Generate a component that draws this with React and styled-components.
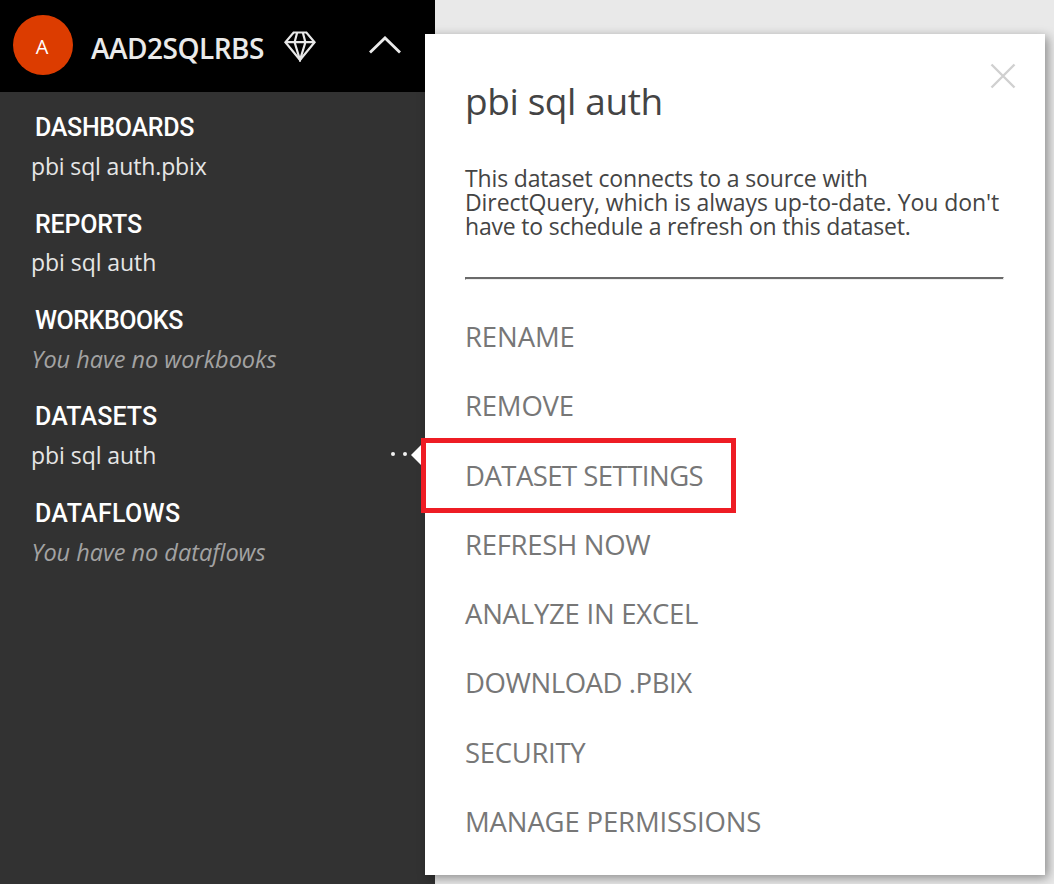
import React from "react";
import styled, { createGlobalStyle } from "styled-components";

const GlobalStyle = createGlobalStyle`
  *, *::before, *::after { box-sizing: border-box; }
  body {
    margin: 0;
    background: #e9e9e9;
    font-family: "Open Sans", "Noto Sans", sans-serif;
    overflow: hidden;
  }
`;

const Page = styled.div`
  position: relative;
  display: flex;
  width: 1054px;
  height: 884px;
  overflow: hidden;
`;

const Sidebar = styled.aside`
  width: 435px;
  height: 100%;
  background: #323232;
`;

const WorkspaceHeader = styled.header`
  display: flex;
  align-items: center;
  height: 92px;
  padding: 0 34px 0 13px;
  background: #000;
  color: #eaeaea;
`;

const Avatar = styled.span`
  display: grid;
  place-items: center;
  width: 60px;
  height: 60px;
  margin: 0 18px 2px 0;
  padding-top: 2px;
  padding-right: 2px;
  border-radius: 50%;
  background: #dc3c00;
  color: #fff;
  font-size: 20px;
`;

const WorkspaceName = styled.h1`
  margin: 3px 0 0;
  font-size: 28px;
  font-weight: 600;
  line-height: 36px;
  letter-spacing: -0.5px;
  white-space: nowrap;
`;

const PremiumIcon = styled.svg`
  margin: 1px 0 0 20.5px;
  flex: none;
`;

const CollapseIcon = styled.svg`
  margin: 0 0 2px auto;
  flex: none;
`;

const Section = styled.section`
  height: 96.4px;
  padding: 20.3px 0 0 31px;
`;

const SectionTitle = styled.h2`
  margin: 0 0 5.7px;
  padding-left: 4px;
  color: #fff;
  font-family: Roboto, sans-serif;
  font-size: 25px;
  font-weight: 500;
  line-height: 32px;
  letter-spacing: ${(p) => p.$tracking}px;
`;

const SectionItem = styled.div`
  display: flex;
  align-items: center;
  justify-content: space-between;
  height: 32px;
  padding-right: 16px;
  color: #e6e6e6;
  font-size: 23px;
  line-height: 32px;
  letter-spacing: ${(p) => p.$tracking}px;
`;

const EmptyNote = styled.div`
  padding-left: 0.5px;
  color: #a3a3a3;
  font-size: 23.5px;
  font-style: italic;
  line-height: 32px;
  letter-spacing: -0.02px;
`;

const MoreDots = styled.span`
  display: flex;
  gap: 7.5px;
  margin-top: -2px;
  &::before, &::after, i { content: ""; width: 4.5px; height: 4.5px; border-radius: 50%; background: #f2f2f2; }
`;

const Flyout = styled.div`
  position: absolute;
  left: 425px;
  top: 34px;
  width: 620px;
  height: 841px;
  padding: 42.6px 41px 0 40px;
  background: #fff;
  box-shadow: 3px 3px 10px rgba(0, 0, 0, 0.4);
`;

const FlyoutArrow = styled.span`
  position: absolute;
  left: -14px;
  top: 406.5px;
  border: 14px solid transparent;
  border-left: 0;
  border-right-color: #fff;
`;

const CloseButton = styled.button`
  position: absolute;
  right: 29px;
  top: 29px;
  display: grid;
  place-items: center;
  width: 26px;
  height: 26px;
  padding: 0;
  border: 0;
  background: none;
`;

const FlyoutTitle = styled.h2`
  margin: 0 0 41.4px;
  color: #444;
  font-size: 37px;
  font-weight: 400;
  line-height: 48px;
  letter-spacing: -0.4px;
`;

const Description = styled.p`
  margin: 0;
  color: #444;
  font-size: 23px;
  line-height: 24px;
  white-space: nowrap;
`;

const DescriptionLine = styled.span`
  display: block;
  letter-spacing: ${(p) => p.$tracking}px;
`;

const Divider = styled.hr`
  height: 3px;
  margin: 39px 0 21.9px;
  border: 1px solid;
  border-color: #6a6a6a #eee #eee #6a6a6a;
  background: #6a6a6a;
`;

const Menu = styled.ul`
  margin: 0;
  padding: 0;
  list-style: none;
`;

const MenuItem = styled.li`
  position: relative;
  height: 69.32px;
  color: #777;
  font-size: 27.5px;
  line-height: 69.32px;
  letter-spacing: ${(p) => p.$tracking}px;
  white-space: nowrap;
`;

const Highlight = styled.span`
  position: absolute;
  left: -44px;
  top: -2.5px;
  width: 315px;
  height: 75px;
  border: 5px solid #ee1c24;
`;

const sections = [
  { title: "DASHBOARDS", tracking: -0.3, item: "pbi sql auth.pbix", itemTracking: -0.14 },
  { title: "REPORTS", tracking: -0.17, item: "pbi sql auth", itemTracking: -0.05 },
  { title: "WORKBOOKS", tracking: -0.45, empty: "You have no workbooks" },
  { title: "DATASETS", tracking: 0.1, item: "pbi sql auth", itemTracking: -0.05, more: true },
  { title: "DATAFLOWS", tracking: 0.3, empty: "You have no dataflows" },
];

const description = [
  ["This dataset connects to a source with", -0.15],
  ["DirectQuery, which is always up-to-date. You don't", -0.08],
  ["have to schedule a refresh on this dataset.", -0.2],
];

const actions = [
  ["RENAME", -0.1],
  ["REMOVE", -0.2],
  ["DATASET SETTINGS", -0.53],
  ["REFRESH NOW", -0.3],
  ["ANALYZE IN EXCEL", -0.24],
  ["DOWNLOAD .PBIX", -0.43],
  ["SECURITY", -0.33],
  ["MANAGE PERMISSIONS", -0.15],
];

export default function App() {
  return (
    <>
      <GlobalStyle />
      <Page>
        <Sidebar>
          <WorkspaceHeader>
            <Avatar>A</Avatar>
            <WorkspaceName>AAD2SQLRBS</WorkspaceName>
            <PremiumIcon width="32" height="31" viewBox="0 0 32 31" fill="none" stroke="#e8e8e8" strokeWidth="2.2">
              <path d="M9.6 1.5H22.4L30.6 11.2L16 29L1.4 11.2Z" />
              <path d="M1.4 11.2H30.6M13.2 1.5L10.6 11.2L16 29L21.4 11.2L18.8 1.5" />
            </PremiumIcon>
            <CollapseIcon width="32" height="18" viewBox="0 0 32 18" fill="none" stroke="#eaeaea" strokeWidth="2.8">
              <path d="M1 16.6L16 1.9L31 16.6" />
            </CollapseIcon>
          </WorkspaceHeader>
          {sections.map((s) => (
            <Section key={s.title}>
              <SectionTitle $tracking={s.tracking}>{s.title}</SectionTitle>
              {s.item ? (
                <SectionItem $tracking={s.itemTracking}>
                  {s.item}
                  {s.more && <MoreDots><i /></MoreDots>}
                </SectionItem>
              ) : (
                <EmptyNote>{s.empty}</EmptyNote>
              )}
            </Section>
          ))}
        </Sidebar>
        <Flyout>
          <FlyoutArrow />
          <CloseButton aria-label="Close">
            <svg width="26" height="26" viewBox="0 0 26 26" fill="none" stroke="#d0d0d0" strokeWidth="2.4">
              <path d="M1.5 1.5L24.5 24.5M24.5 1.5L1.5 24.5" />
            </svg>
          </CloseButton>
          <FlyoutTitle>pbi sql auth</FlyoutTitle>
          <Description>
            {description.map(([text, tracking]) => (
              <DescriptionLine key={text} $tracking={tracking}>{text}</DescriptionLine>
            ))}
          </Description>
          <Divider />
          <Menu>
            {actions.map(([label, tracking]) => (
              <MenuItem key={label} $tracking={tracking}>
                {label}
                {label === "DATASET SETTINGS" && <Highlight />}
              </MenuItem>
            ))}
          </Menu>
        </Flyout>
      </Page>
    </>
  );
}
